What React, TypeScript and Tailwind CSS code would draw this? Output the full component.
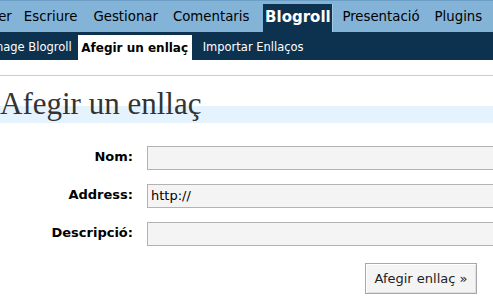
import React from "react";

export default function App() {
  const item = "h-[28px] pb-[2px] px-[5px] flex items-center text-[13.3px] text-black";
  return (
    <div className="w-[493px] h-[303px] overflow-hidden bg-white font-['DejaVu_Sans',sans-serif] text-black">
      {/* top menu */}
      <div className="h-[32px] bg-[#83b4d8] border-t border-[#6c9ec6] flex items-end overflow-hidden whitespace-nowrap">
        <div className="flex items-end -ml-[33px]">
          <span className={item}>Tauler</span>
          <span className={item + " ml-[2px] mr-[6px]"}>Escriure</span>
          <span className={item + " mr-[5px]"}>Gestionar</span>
          <span className={item + " mr-[9px]"}>Comentaris</span>
          <span className="h-[28px] pb-[2px] w-[70px] flex items-center justify-center text-[15px] font-bold text-white bg-[#0d324f] border-r border-[#a4cbe8]">Blogroll</span>
          <span className={item + " ml-[4px] mr-[5px]"}>Presentació</span>
          <span className={item}>Plugins</span>
        </div>
      </div>
      {/* sub menu */}
      <div className="h-[28px] bg-[#0d324f] flex items-end overflow-hidden whitespace-nowrap">
        <div className="flex items-end -ml-[25px]">
          <span className="h-[25px] px-[4px] mr-[2px] flex items-center text-[11.5px] text-white">Manage Blogroll</span>
          <span className="h-[25px] w-[114px] flex items-center justify-center text-[12px] font-bold text-black bg-white">Afegir un enllaç</span>
          <span className="h-[25px] px-[4px] ml-[7px] flex items-center text-[11.5px] text-white">Importar Enllaços</span>
        </div>
      </div>
      {/* wrap */}
      <div className="mt-[15px] border-t border-[#cccccc]">
        <h2 className="mt-[10px] h-[37px] font-['Liberation_Serif',serif] text-[31px] leading-[36px] text-[#333333] bg-[linear-gradient(to_bottom,transparent_0px,transparent_20px,#e5f3ff_20px,#e5f3ff_37px)]">
          Afegir un enllaç
        </h2>
        <div className="mt-[23px] grid grid-cols-[133px_400px] gap-x-[14px] gap-y-[14px] text-[13px]">
          <div className="text-right font-bold leading-[16px] mt-[3px]">Nom:</div>
          <div className="h-[24px] bg-[#f4f4f4] border border-[#b2b2b2]"></div>
          <div className="text-right font-bold leading-[16px] mt-[3px]">Address:</div>
          <div className="h-[24px] bg-[#f4f4f4] border border-[#b2b2b2] pl-[3px] leading-[22px]">http://</div>
          <div className="text-right font-bold leading-[16px] mt-[3px]">Descripció:</div>
          <div className="h-[24px] bg-[#f4f4f4] border border-[#b2b2b2]"></div>
        </div>
        <div className="flex justify-end pr-[16px] mt-[17px]">
          <div className="h-[31px] w-[112px] flex items-center justify-center border border-[#a8a8a8] bg-[#f4f4f4] shadow-[inset_1px_1px_0_#ffffff,inset_-1px_-1px_0_#e0e0e0] text-[13px] text-[#222222]">
            Afegir enllaç »
          </div>
        </div>
      </div>
    </div>
  );
}
